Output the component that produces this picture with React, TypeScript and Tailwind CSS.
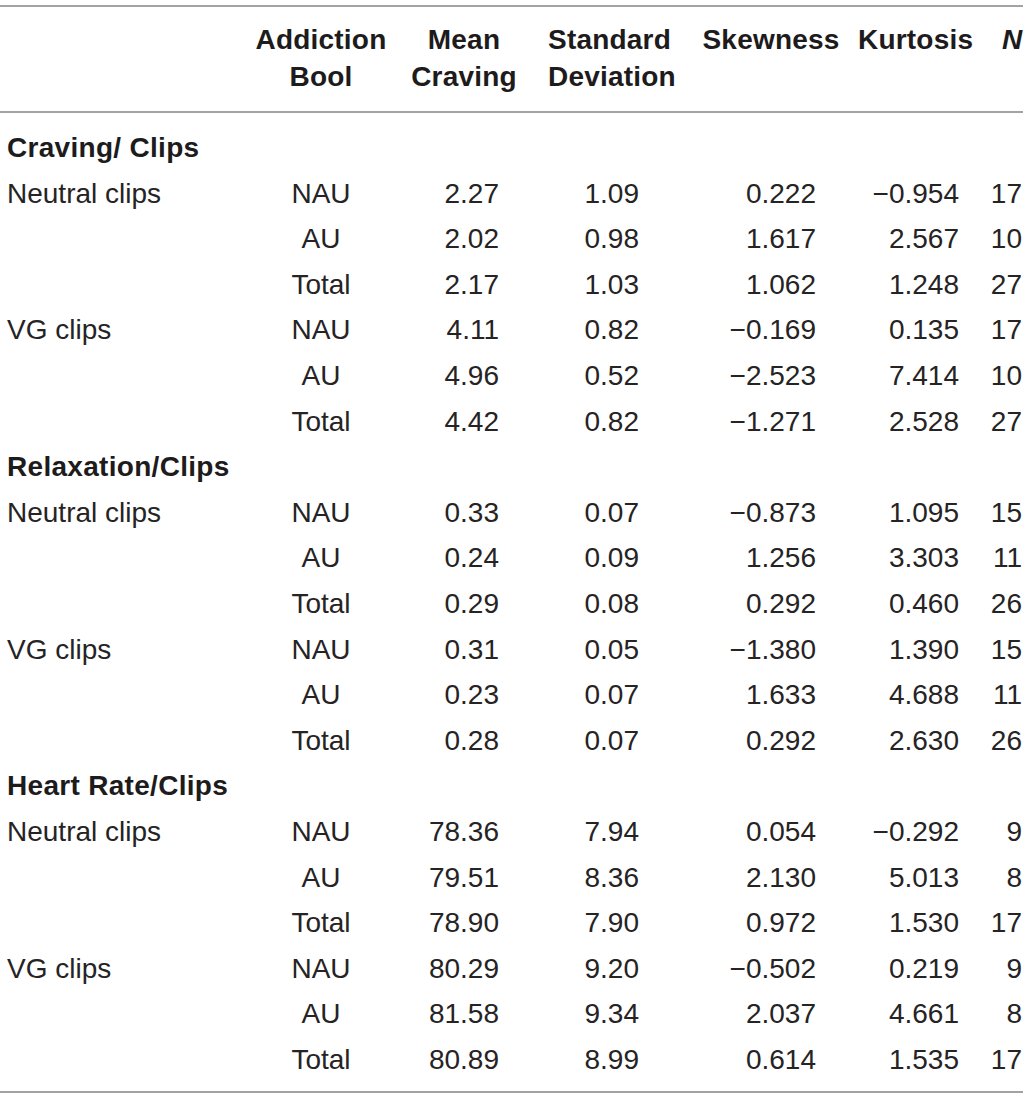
import React from "react";

type Row = [string, string, string, string, string, string, string];

const sections: { title: string; rows: Row[] }[] = [
  {
    title: "Craving/ Clips",
    rows: [
      ["Neutral clips", "NAU", "2.27", "1.09", "0.222", "−0.954", "17"],
      ["", "AU", "2.02", "0.98", "1.617", "2.567", "10"],
      ["", "Total", "2.17", "1.03", "1.062", "1.248", "27"],
      ["VG clips", "NAU", "4.11", "0.82", "−0.169", "0.135", "17"],
      ["", "AU", "4.96", "0.52", "−2.523", "7.414", "10"],
      ["", "Total", "4.42", "0.82", "−1.271", "2.528", "27"],
    ],
  },
  {
    title: "Relaxation/Clips",
    rows: [
      ["Neutral clips", "NAU", "0.33", "0.07", "−0.873", "1.095", "15"],
      ["", "AU", "0.24", "0.09", "1.256", "3.303", "11"],
      ["", "Total", "0.29", "0.08", "0.292", "0.460", "26"],
      ["VG clips", "NAU", "0.31", "0.05", "−1.380", "1.390", "15"],
      ["", "AU", "0.23", "0.07", "1.633", "4.688", "11"],
      ["", "Total", "0.28", "0.07", "0.292", "2.630", "26"],
    ],
  },
  {
    title: "Heart Rate/Clips",
    rows: [
      ["Neutral clips", "NAU", "78.36", "7.94", "0.054", "−0.292", "9"],
      ["", "AU", "79.51", "8.36", "2.130", "5.013", "8"],
      ["", "Total", "78.90", "7.90", "0.972", "1.530", "17"],
      ["VG clips", "NAU", "80.29", "9.20", "−0.502", "0.219", "9"],
      ["", "AU", "81.58", "9.34", "2.037", "4.661", "8"],
      ["", "Total", "80.89", "8.99", "0.614", "1.535", "17"],
    ],
  },
];

const cols = "grid grid-cols-[250px_142px_144px_154px_162px_138px_33px]";

function DataRow({ row }: { row: Row }) {
  return (
    <div className={`${cols} h-[45.6px] items-center leading-[45.6px]`}>
      <div className="pl-[7px]">{row[0]}</div>
      <div className="text-center">{row[1]}</div>
      <div className="text-right pr-[37px]">{row[2]}</div>
      <div className="text-right pr-[51px]">{row[3]}</div>
      <div className="text-right pr-[36px]">{row[4]}</div>
      <div className="text-right pr-[31px]">{row[5]}</div>
      <div className="text-right pr-[1px]">{row[6]}</div>
    </div>
  );
}

export default function App() {
  return (
    <div className="w-[1029px] h-[1099px] bg-white text-[#262324] text-[28px] font-['Liberation_Sans',Arial,sans-serif]">
      <div className="w-[1023px] pt-[5px]">
        <div className="h-[2px] bg-[#a3a3a3]" />

        {/* header */}
        <div className={`${cols} font-bold leading-[37px] pt-[14px] pb-[16px] tracking-[0.2px] text-[#1d1b1c]`}>
          <div />
          <div className="text-center">Addiction<br />Bool</div>
          <div className="text-center">Mean<br />Craving</div>
          <div className="pl-[12px]">Standard<br />Deviation</div>
          <div className="text-center">Skewness</div>
          <div className="pl-[6px]">Kurtosis</div>
          <div className="pl-[12px] italic tracking-normal">N</div>
        </div>
        <div className="h-[2px] bg-[#a3a3a3]" />

        <div className="pt-[12px] pb-[9px]">
          {sections.map((s) => (
            <div key={s.title}>
              <div className="h-[45.6px] leading-[45.6px] pl-[7px] font-bold tracking-[0.3px] text-[#1d1b1c]">{s.title}</div>
              {s.rows.map((r, i) => (
                <DataRow key={i} row={r} />
              ))}
            </div>
          ))}
        </div>
        <div className="h-[2px] bg-[#a3a3a3]" />
      </div>
    </div>
  );
}
